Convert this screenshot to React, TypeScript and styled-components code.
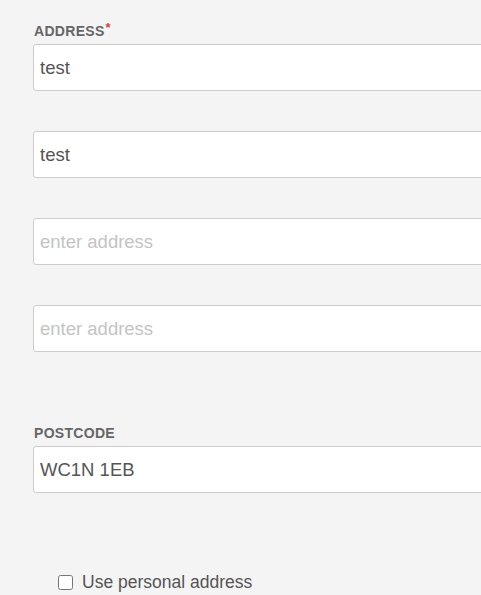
import styled, { createGlobalStyle } from 'styled-components';

const GlobalStyle = createGlobalStyle`
	html, body {
		margin: 0;
		padding: 0;
		background-color: #f4f4f4;
		overflow: hidden;
	}
	body {
		font-family: "Liberation Sans", Arial, sans-serif;
	}
`;

const Page = styled.div`
	padding: 23px 0 0 33px;
	width: 520px;
`;

const Field = styled.div<{ $gap?: number }>`
	display: flex;
	flex-direction: column;
	margin-bottom: ${(p) => p.$gap ?? 40}px;
`;

const Label = styled.label`
	display: block;
	font-size: 14px;
	line-height: 16px;
	font-weight: bold;
	color: #666;
	text-transform: uppercase;
	margin: 0 0 5px 1px;
	letter-spacing: 0.3px;
`;

const Required = styled.span`
	color: #d9413b;
	margin-left: 1px;
	font-size: 13px;
	vertical-align: top;
	position: relative;
	top: -3px;
`;

const Input = styled.input`
	box-sizing: border-box;
	width: 100%;
	height: 47px;
	padding: 0 6px;
	border: 1px solid #ccc;
	border-radius: 3px;
	background: #fff;
	font-family: "Liberation Sans", Arial, sans-serif;
	font-size: 18.5px;
	color: #555;
	outline: none;
	&::placeholder {
		color: #c4c4c4;
	}
`;

const CheckRow = styled.label`
	display: flex;
	align-items: center;
	gap: 9px;
	margin-left: 25px;
	font-size: 17.5px;
	line-height: 20px;
	color: #555;
`;

const Check = styled.input`
	margin: 0;
	width: 15px;
	height: 15px;
`;

export default function App() {
	return (
		<>
			<GlobalStyle />
			<Page>
				<Field>
					<Label>
						Address<Required>*</Required>
					</Label>
					<Input defaultValue="test" />
				</Field>
				<Field>
					<Input defaultValue="test" />
				</Field>
				<Field>
					<Input placeholder="enter address" />
				</Field>
				<Field $gap={73}>
					<Input placeholder="enter address" />
				</Field>
				<Field $gap={79}>
					<Label>Postcode</Label>
					<Input defaultValue="WC1N 1EB" />
				</Field>
				<CheckRow>
					<Check type="checkbox" />
					Use personal address
				</CheckRow>
			</Page>
		</>
	);
}
